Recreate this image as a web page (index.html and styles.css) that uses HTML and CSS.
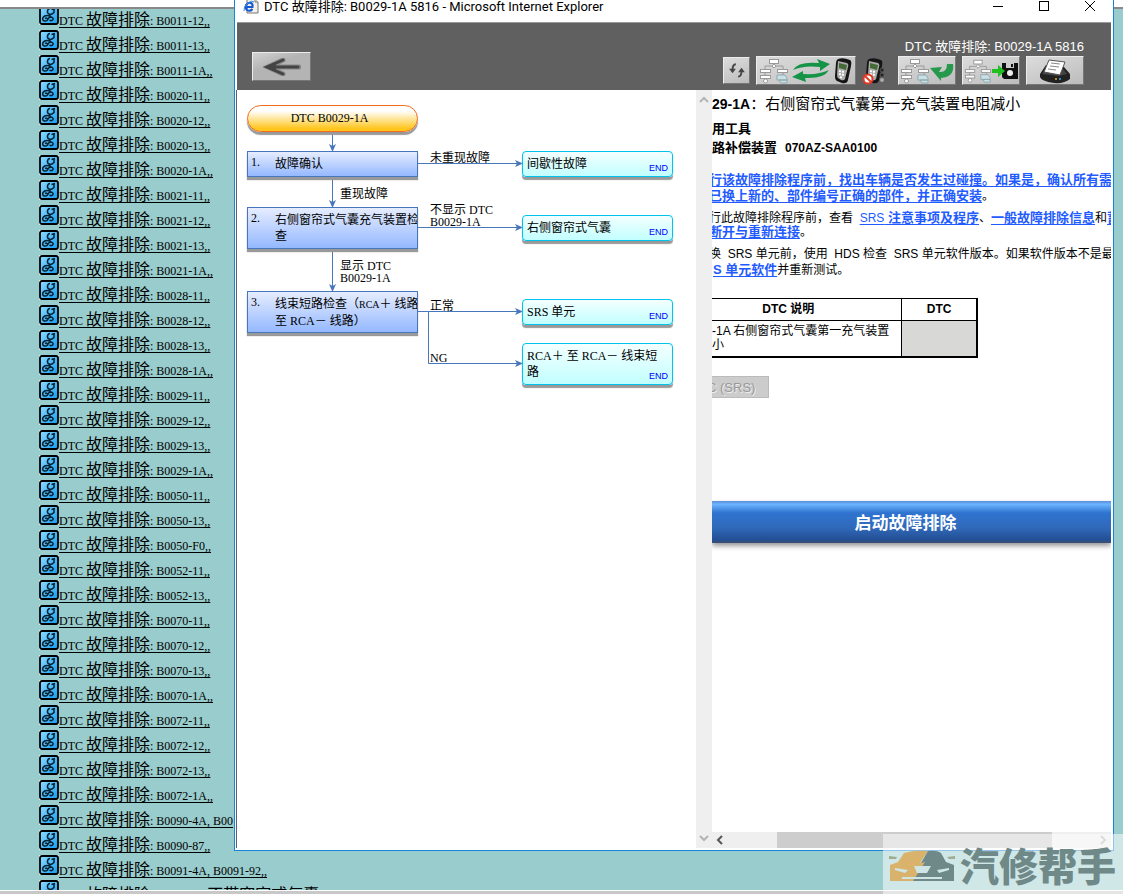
FILE: index.html
```
<!DOCTYPE html>
<html lang="zh-CN">
<head>
<meta charset="utf-8">
<title>DTC 故障排除</title>
<link rel="stylesheet" href="styles.css">
</head>
<body>
<svg class="defs" aria-hidden="true">
  <defs>
    <linearGradient id="steth" x1="0" y1="0" x2="1" y2="1"><stop offset="0" stop-color="#8fdcff"/><stop offset="1" stop-color="#109cf4"/></linearGradient>
    <symbol id="dtc" viewBox="0 0 20 20">
      <rect width="20" height="20" fill="#d8ecec"/>
      <rect x="1" y="1" width="18" height="18" rx="2" fill="url(#steth)" stroke="#000" stroke-width="1.8"/>
      <path d="M12.500 4.500L16 3.500M15 4V7.500Q13 9.500 11 9.500Q8 8.500 8.500 6Q9 3.500 11 3.500M11 9.500V12M11 11Q6 9.500 4 12.500Q3 15.500 5.500 16Q8.500 16.500 8.500 14Q8 12.500 6 13.500M8.500 15Q9 12.500 12 12Q14.500 12.500 14 14.500Q12.500 16.500 10.500 15" fill="none" stroke="#06202e" stroke-width="1.500"/>
    </symbol>
    <symbol id="tree" viewBox="0 0 30 26">
      <path d="M15 5V10M6 13V8H24V13M6 12V24M24 12V24" fill="none" stroke="#999" stroke-width="1"/>
      <g fill="#fff" stroke="#999" stroke-width="1"><rect x="10.500" y="1.500" width="9" height="4"/><rect x="1.500" y="11.500" width="10" height="3"/><rect x="18.500" y="11.500" width="10" height="3"/><rect x="1.500" y="17.500" width="10" height="3"/><path d="M15 6L17 8L15 10L13 8Z"/><circle cx="6.500" cy="23" r="2"/></g>
      <path d="M18 17H26L28 20V22H18ZM20 22H28V25H22Z" fill="#c9e1e5" stroke="#8fa9af" stroke-width="1"/>
    </symbol>
    <symbol id="handheld" viewBox="0 0 20 28">
      <path d="M5 2Q10 0 17 3Q19 4 18 9L15 23Q14 27 9 26L4 24Q2 23 2 19L3 6Q3 3 5 2Z" fill="#151515"/>
      <path d="M5 4L14 6Q16 7 15 10L12 22Q11 24 8 23L5 21Q4 20 4 17Z" fill="#aaa"/>
      <path d="M6 6L14 8L13 13L6 11Z" fill="#426b35"/>
      <path d="M6 14L11 15M6 17L11 18M7 20L10 21" stroke="#fff" stroke-width="2" stroke-dasharray="2 1"/>
    </symbol>
  </defs>
</svg>

<div class="page">
  <div class="strip"></div>
  <main class="results"><ul class="dtc-list" id="dtc-list"></ul></main>
  <div class="statusbar"></div>
</div>

<section class="window">
  <header class="titlebar">
    <svg class="ie" viewBox="0 0 16 16"><path d="M4 0H12L15 3V14H4Z" fill="#f2f1e7" stroke="#777"/><path d="M12 0V3H15" fill="#fff" stroke="#777"/><path d="M9.500 10Q7 13 4 11Q2 9 3 6Q5 3 8 4Q10 5 9.500 8H4" fill="none" stroke="#1556d2" stroke-width="2"/><path d="M1 12Q0 8 5 4Q9 1 11 3" fill="none" stroke="#2f8df0" stroke-width="1"/></svg>
    <h1 class="caption">DTC 故障排除: B0029-1A 5816 - Microsoft Internet Explorer</h1>
    <div class="controls">
      <button class="ctl" aria-label="最小化"><svg viewBox="0 0 12 12"><path d="M1 6.500H11"/></svg></button>
      <button class="ctl" aria-label="最大化"><svg viewBox="0 0 12 12"><rect x="1.500" y="1.500" width="9" height="9"/></svg></button>
      <button class="ctl" aria-label="关闭"><svg viewBox="0 0 12 12"><path d="M1 1L11 11M11 1L1 11"/></svg></button>
    </div>
  </header>

  <div class="toolbar">
    <button class="tool back" aria-label="返回"><svg width="38" height="18" viewBox="0 0 38 18"><path d="M20 2L5 9L20 16M5 9H36" fill="none" stroke="#888" stroke-width="5" stroke-linecap="round"/><path d="M20 2L4 9L20 16M5 9H35" fill="none" stroke="#444" stroke-width="3" stroke-linecap="round"/><path d="M2 9L13 4V14Z" fill="#444"/></svg></button>
    <div class="toolside">
      <p class="doc-title">DTC 故障排除: B0029-1A 5816</p>
      <div class="tools">
        <button class="tool refresh" aria-label="刷新"><svg width="18" height="18" viewBox="0 0 16 16"><path d="M7 2Q4 2 4 7M9 13Q12 13 12 8" fill="none" stroke="#444" stroke-width="1.600"/><path d="M1 6H7L4 10ZM9 9H15L12 5Z" fill="#444"/></svg></button>
        <button class="tool sync" aria-label="同步"><svg width="30" height="26"><use href="#tree"/></svg><svg width="38" height="26" viewBox="0 0 38 26"><path d="M1 12Q6 3 27 5L25 1L38 6L28 13L28 9Q12 7 1 12ZM37 12Q32 21 13 20L14 24L0 19L11 13V16Q27 17 37 12Z" fill="#159447"/></svg><svg width="20" height="28"><use href="#handheld"/></svg></button>
        <svg class="offline" width="24" height="28" viewBox="0 0 24 28"><use href="#handheld" x="2" width="20" height="28"/><g fill="#222" stroke="#555"><circle cx="20" cy="13" r="2"/><circle cx="20" cy="18" r="2"/></g><circle cx="20" cy="23" r="2" fill="#aaa"/><circle cx="6" cy="22" r="4.500" fill="#fff" stroke="#e23b25" stroke-width="2"/><path d="M3 19L9 25" stroke="#e23b25" stroke-width="2"/></svg>
        <button class="tool wide" aria-label="返回流程"><svg width="30" height="26"><use href="#tree"/></svg><svg width="24" height="24" viewBox="0 0 24 24"><path d="M17 5H23Q25 18 11 19L11 22L0 9L12 8L9 13Q17 14 17 5Z" fill="#26994d"/></svg></button>
        <button class="tool wide" aria-label="保存"><svg width="28" height="26"><use href="#tree"/></svg><svg width="27" height="24" viewBox="0 0 27 24"><path d="M10 4H26V20H12L10 18Z" fill="#111"/><path d="M14 4H22V9H14Z" fill="#ccc"/><path d="M19 5H21V8H19Z" fill="#111"/><circle cx="18" cy="14" r="3" fill="#eee"/><path d="M0 10H6V6L13 12L6 18V14H0Z" fill="#1fc01f"/></svg></button>
        <button class="tool wide" aria-label="打印"><svg width="34" height="26" viewBox="0 0 34 26"><path d="M2 16L8 7L26 9L32 16V21Q26 26 16 25Q3 23 2 19Z" fill="#222"/><path d="M4 16L9 9L25 11L29 16L20 18Z" fill="#444"/><path d="M11 2L27 4L22 17L6 14Z" fill="#fff" stroke="#555"/><path d="M13 5L22 6M12 8L21 9M10 11L18 12" stroke="#888"/><circle cx="18" cy="21" r="1" fill="#f2ad20"/><circle cx="22" cy="21" r="1" fill="#31aef0"/></svg></button>
      </div>
    </div>
  </div>

  <div class="panes">
    <div class="flow">
      <svg class="wires" width="459" height="310" viewBox="0 0 459 310">
        <defs><marker id="tip" markerWidth="8" markerHeight="8" refX="7" refY="4" orient="auto" markerUnits="userSpaceOnUse"><path d="M0 0.500L8 4L0 7.500L2 4Z" fill="#4677bd"/></marker></defs>
        <g fill="none" stroke="#4677bd" marker-end="url(#tip)"><path d="M95.500 43V61"/><path d="M95.500 88V117"/><path d="M95.500 160V201"/><path d="M181 73.500H285"/><path d="M181 137.500H285"/><path d="M181 221.500H285"/><path d="M191.500 221.500V273.500H285"/></g>
      </svg>
      <div class="node start">DTC B0029-1A</div>
      <div class="node step s1"><span>1.</span><p>故障确认</p></div>
      <div class="node step s2"><span>2.</span><p>右侧窗帘式气囊充气装置检查</p></div>
      <div class="node step s3"><span>3.</span><p>线束短路检查（<small>RCA</small>＋ 线路<br>至 RCA－ 线路）</p></div>
      <div class="node end e1"><p>间歇性故障</p><b>END</b></div>
      <div class="node end e2"><p>右侧窗帘式气囊</p><b>END</b></div>
      <div class="node end e3"><p>SRS 单元</p><b>END</b></div>
      <div class="node end e4"><p>RCA＋ 至 RCA－ 线束短路</p><b>END</b></div>
      <p class="label l1">未重现故障</p>
      <p class="label l2">重现故障</p>
      <p class="label l3">不显示 DTC<br>B0029-1A</p>
      <p class="label l4">显示 DTC<br>B0029-1A</p>
      <p class="label l5">正常</p>
      <p class="label l6">NG</p>
    </div>
    <div class="vbar">
      <svg width="10" height="8" viewBox="0 0 10 8"><path d="M1 6L5 2L9 6"/></svg>
      <svg width="10" height="8" viewBox="0 0 10 8"><path d="M1 2L5 6L9 2"/></svg>
    </div>
    <div class="detail">
      <article class="doc">
        <h2 class="heading"><b>29-1A</b>：右侧窗帘式气囊第一充气装置电阻减小</h2>
        <h3 class="sub">用工具</h3>
        <p class="sub">路补偿装置<span class="part">070AZ-SAA0100</span></p>
        <p class="para notice"><a href="#crash">行该故障排除程序前，找出车辆是否发生过碰撞。如果是，确认所有需<br>已换上新的、部件编号正确的部件，并正确安装</a>。</p>
        <p class="para tight">行此故障排除程序前，查看&nbsp; <a href="#srs"><span class="plain">SRS</span> 注意事项及程序</a>、<a href="#info">一般故障排除信息</a>和<a href="#battery">蓄<br>断开与重新连接</a>。</p>
        <p class="para">换&nbsp; SRS 单元前，使用&nbsp; HDS 检查&nbsp; SRS 单元软件版本。如果软件版本不是最<br><a class="inset" href="#software">S 单元软件</a>并重新测试。</p>
        <table class="codes">
          <tr><th class="desc">DTC 说明</th><th>DTC</th></tr>
          <tr><td>-1A 右侧窗帘式气囊第一充气装置<br>小</td><td class="empty"></td></tr>
        </table>
        <button class="srs" disabled>C (SRS)</button>
        <button class="launch">启动故障排除</button>
      </article>
      <div class="hbar">
        <svg class="on" width="8" height="10" viewBox="0 0 8 10"><path d="M6 1L2 5L6 9"/></svg>
        <div class="track"><div class="thumb"></div></div>
        <svg width="8" height="10" viewBox="0 0 8 10"><path d="M2 1L6 5L2 9"/></svg>
      </div>
    </div>
  </div>
</section>

<div class="brand">
  <svg width="66" height="32" viewBox="0 0 66 32"><path d="M1 15L9 12L15 3Q25 0 39 1L31 13L38 10L25 31H1Z" fill="#d9b36c"/><path d="M39 1Q48 0 52 3L57 12L65 15V31H24L36 12L32 13Z" fill="#6f8888"/><path d="M6 18L19 20L16 23L6 20ZM60 18L48 20L50 23L60 20ZM25 16H42L38 23H28ZM13 27H53V29H13Z" fill="#d0e6e6"/><path d="M0 6L8 7L7 9H0ZM66 6L58 7L60 9H66Z" fill="#9fac91"/></svg>
  <span>汽修帮手</span>
</div>
<script src="list.js"></script>
</body>
</html>
```
FILE: styles.css
```
* { box-sizing: border-box; }
body { margin: 0; overflow: hidden; background: #99cccc; color: #000; font-family: "Liberation Sans", "Noto Sans CJK SC", sans-serif; }
h1, h2, h3, p, ul { margin: 0; padding: 0; font-weight: normal; }
button { padding: 0; border: 0; font-family: inherit; }
svg { flex: none; display: block; }
.defs { position: absolute; width: 0; height: 0; }

.page { display: flex; flex-direction: column; height: 100vh; }
.strip { flex: none; height: 9px; background: #fff; border-bottom: 2px solid #888; }
.results { flex: 1; min-height: 0; overflow: hidden; }
.dtc-list { margin-top: -4px; padding-left: 39px; list-style: none; }
.dtc-list li { height: 25px; }
.dtc-list a { display: flex; color: #000; text-decoration: none; white-space: nowrap; }
.dtc-list span { height: 25px; line-height: 32px; font-family: "Liberation Serif", "Noto Sans CJK SC", serif; font-size: 12px; text-decoration: underline; text-decoration-thickness: 1px; text-underline-offset: 2px; text-decoration-skip-ink: none; }
.dtc-list i { font-style: normal; font-size: 16px; line-height: 16px; }
.statusbar { flex: none; height: 4px; background: #c8c8c8; border-top: 1px solid #fff; }

.window { position: absolute; top: 0; right: 9px; bottom: 43px; left: 234px; display: flex; flex-direction: column; background: #fff; border: 1px solid #1883d7; border-top: 0; padding: 0 2px 2px 1px; }
.titlebar { display: flex; align-items: flex-start; height: 22px; padding-left: 7px; overflow: hidden; }
.ie { width: 16px; height: 16px; margin-top: -1px; }
.caption { flex: 1; margin-left: 5px; font: 13px/14px Roboto, "Noto Sans CJK SC", sans-serif; white-space: nowrap; }
.controls { display: flex; gap: 34px; padding-right: 15px; }
.ctl { width: 12px; height: 12px; background: none; }
.ctl svg { width: 12px; height: 12px; fill: none; stroke: #000; }

.toolbar { display: flex; justify-content: space-between; flex: none; height: 68px; margin-left: 1px; padding: 0 27px 5px 15px; background: #606060; border-top: 1px solid #999; }
.tool { display: flex; align-items: center; justify-content: center; height: 29px; background: linear-gradient(160deg, #dcdcdc, #bcbcbc); border: 1px solid #ececec; border-right-color: #777; border-bottom-color: #777; }
.back { width: 59px; margin-top: 29px; background: linear-gradient(160deg, #d2d2d2, #b4b4b4 40%); }
.toolside { display: flex; flex-direction: column; justify-content: flex-end; align-items: flex-end; }
.doc-title { color: #fff; font-size: 13px; line-height: 18px; }
.tools { display: flex; align-items: center; gap: 6px; }
.refresh { width: 27px; height: 27px; }
.sync { width: 100px; gap: 3px; }
.offline { margin-right: 6px; }
.wide { width: 58px; }

.panes { flex: 1; min-height: 0; display: grid; grid-template-columns: minmax(0, 459fr) 16px minmax(0, 399fr); border-left: 1px solid #606060; }
.flow { position: relative; overflow: hidden; font: 12px/16px "Liberation Serif", "Noto Sans CJK SC", serif; }
.wires { position: absolute; top: 0; left: 0; }
.node { position: absolute; border: 1px solid #4677bd; box-shadow: 0 3px 1px #999; }
.start { top: 15px; left: 10px; width: 171px; height: 27px; padding-right: 6px; border-color: #f26a1b; border-radius: 14px; background: linear-gradient(#fff 20%, #ffc61f 90%); line-height: 24px; text-align: center; }
.step { left: 10px; width: 171px; display: flex; padding: 4px 0 4px 3px; overflow: hidden; background: linear-gradient(#e6edff, #94b8ff); }
.step span { width: 24px; flex: none; line-height: 12px; }
.step p { flex: none; width: 146px; }
.step small { font-size: 10px; }
.s1 { top: 61px; height: 26px; }
.s2 { top: 117px; height: 42px; }
.s3 { top: 201px; height: 42px; }
.s3 p { white-space: nowrap; }
.end { left: 285px; width: 151px; padding: 4px; border-color: #00c3ee; border-radius: 4px; background: linear-gradient(#f4ffff, #c2ffff); }
.end p { width: 138px; }
.end b { position: absolute; right: 4px; bottom: 2px; color: #00f; font: 9px/12px "Liberation Sans", sans-serif; }
.e1 { top: 61px; height: 26px; }
.e2 { top: 125px; height: 26px; }
.e3 { top: 209px; height: 26px; }
.e4 { top: 253px; height: 42px; }
.label { position: absolute; line-height: 12px; white-space: nowrap; }
.l1 { top: 62px; left: 193px; }
.l2 { top: 98px; left: 103px; }
.l3 { top: 114px; left: 193px; }
.l4 { top: 170px; left: 103px; }
.l5 { top: 210px; left: 193px; }
.l6 { top: 262px; left: 193px; }

.vbar { display: flex; flex-direction: column; align-items: center; justify-content: space-between; padding: 6px 0; background: #efefef; }
.vbar svg, .hbar svg { fill: none; stroke: #b4b4b4; stroke-width: 2; }
.detail { display: flex; flex-direction: column; min-width: 0; }
.doc { flex: 1; min-height: 0; display: flex; flex-direction: column; overflow: hidden; font-size: 12px; white-space: nowrap; }
.heading { font-size: 15px; line-height: 18px; padding-top: 5px; }
.heading b { font-size: 14px; }
.sub { font-size: 13px; font-weight: bold; line-height: 19px; }
h3.sub { margin-top: 6px; }
.part { margin-left: 8px; font-size: 12px; }
.para { margin: 0 0 7px -3px; line-height: 16px; }
.notice { margin-top: 14px; }
.tight { line-height: 14px; }
.para a { color: #1f5bff; font-size: 13px; font-weight: bold; text-underline-offset: 2px; text-decoration-thickness: 1px; text-decoration-skip-ink: none; }
.para .plain { font-size: 12px; font-weight: normal; }
.para .inset { margin-left: 4px; }
.codes { width: 266px; margin-top: 13px; border-collapse: collapse; border: 1px solid #000; border-left: 0; border-right-width: 2px; border-bottom-width: 2px; line-height: 14px; }
.codes th, .codes td { padding: 3px 0 4px; border: 1px solid #000; border-left: 0; text-align: left; }
.codes tr > :last-child { border-right-width: 2px; }
.codes th { width: 76px; height: 21px; text-align: center; }
.codes .desc { width: 190px; padding-right: 87px; text-align: right; }
.codes .empty { background: #d8d8d6; }
.srs { align-self: flex-start; flex: none; width: 57px; height: 22px; margin-top: 18px; border: 1px solid #bbb; border-left: 0; background: #ccc; color: #999; font-size: 13px; text-align: left; text-indent: -5px; text-shadow: 1px 1px #eee; }
.launch { flex: none; height: 42px; margin-top: 103px; padding: 0 12px 2px 0; background: linear-gradient(#5b8fdc, #6cb4ff 8%, #2f74d0 28%, #3068b8 65%, #234f94 92%, #3c4f70); color: #fff; font-size: 17px; font-weight: bold; box-shadow: 0 3px 5px #999; }
.hbar { flex: none; display: flex; align-items: center; height: 16px; padding: 0 4px; background: #efefef; }
.hbar .on { stroke: #555; }
.track { flex: 1; display: flex; height: 100%; padding: 0 47px 0 53px; }
.thumb { flex: 1; background: #cdcdcd; }

.brand { position: absolute; right: 0; bottom: 0; display: flex; align-items: center; gap: 5px; width: 240px; height: 60px; padding: 4px 0 0 6px; background: rgba(255, 255, 255, .53); color: #6f8888; font: 900 39px/44px "Noto Sans CJK SC", sans-serif; white-space: nowrap; }
.brand span { padding-bottom: 4px; }
```
FILE: list.js
```
const codes = [
  "B0011-12,,", "B0011-13,,", "B0011-1A,,", "B0020-11,,", "B0020-12,,", "B0020-13,,", "B0020-1A,,",
  "B0021-11,,", "B0021-12,,", "B0021-13,,", "B0021-1A,,", "B0028-11,,", "B0028-12,,", "B0028-13,,", "B0028-1A,,",
  "B0029-11,,", "B0029-12,,", "B0029-13,,", "B0029-1A,,", "B0050-11,,", "B0050-13,,", "B0050-F0,,",
  "B0052-11,,", "B0052-13,,", "B0070-11,,", "B0070-12,,", "B0070-13,,", "B0070-1A,,",
  "B0072-11,,", "B0072-12,,", "B0072-13,,", "B0072-1A,,", "B0090-4A, B00", "B0090-87,,", "B0091-4A, B0091-92,,",
  "B0092-12 <i>不带窗帘式气囊</i>"
];
document.getElementById("dtc-list").innerHTML = codes.map(code =>
  `<li><a href="#dtc"><svg width="20" height="20"><use href="#dtc"/></svg><span>DTC <i>故障排除</i>: ${code}</span></a></li>`
).join("");
```
